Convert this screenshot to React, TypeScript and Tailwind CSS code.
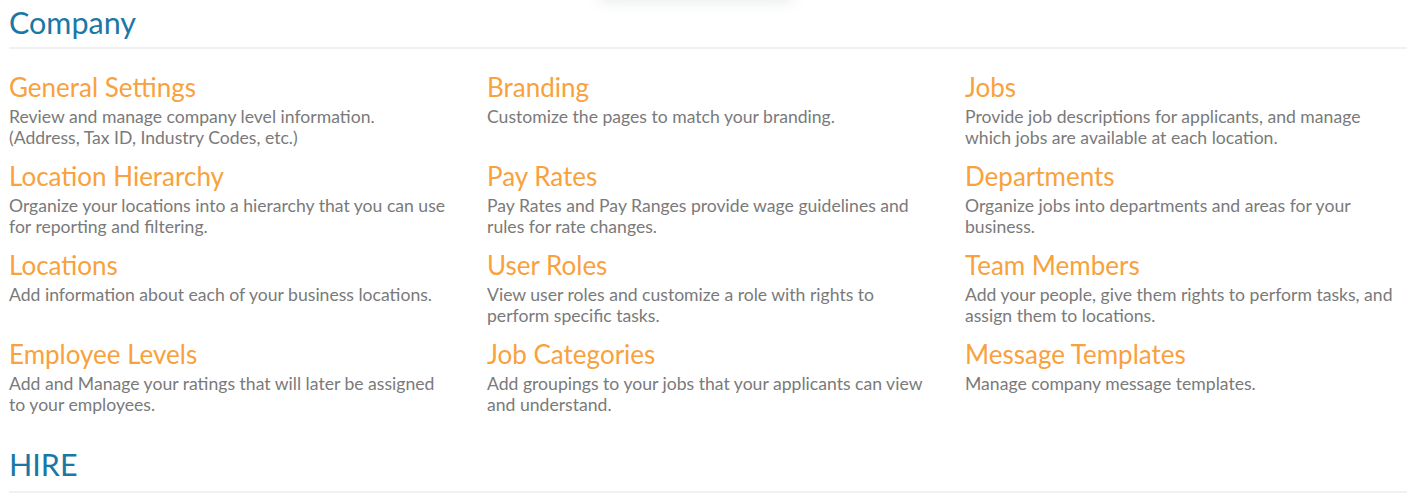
import React from "react";

const items: { title: string; desc: string }[][] = [
  [
    { title: "General Settings", desc: "Review and manage company level information.\n(Address, Tax ID, Industry Codes, etc.)" },
    { title: "Branding", desc: "Customize the pages to match your branding." },
    { title: "Jobs", desc: "Provide job descriptions for applicants, and manage\nwhich jobs are available at each location." },
  ],
  [
    { title: "Location Hierarchy", desc: "Organize your locations into a hierarchy that you can use\nfor reporting and filtering." },
    { title: "Pay Rates", desc: "Pay Rates and Pay Ranges provide wage guidelines and\nrules for rate changes." },
    { title: "Departments", desc: "Organize jobs into departments and areas for your\nbusiness." },
  ],
  [
    { title: "Locations", desc: "Add information about each of your business locations." },
    { title: "User Roles", desc: "View user roles and customize a role with rights to\nperform specific tasks." },
    { title: "Team Members", desc: "Add your people, give them rights to perform tasks, and\nassign them to locations." },
  ],
  [
    { title: "Employee Levels", desc: "Add and Manage your ratings that will later be assigned\nto your employees." },
    { title: "Job Categories", desc: "Add groupings to your jobs that your applicants can view\nand understand." },
    { title: "Message Templates", desc: "Manage company message templates." },
  ],
];

export default function App() {
  return (
    <div
      className="relative w-[1410px] h-[498px] overflow-hidden bg-white"
      style={{ fontFamily: "Lato, 'Open Sans', sans-serif" }}
    >
      <div className="absolute left-[598px] top-[-40px] w-[196px] h-[40px] rounded-md bg-white shadow-[0_2px_14px_rgba(40,60,90,0.10)]" />
      <div className="pl-[9px] pr-[3px]">
        <h1 className="text-[30.5px] leading-[36px] pt-[4px] text-[#1b78a6]">Company</h1>
        <div className="mt-[7px] h-[2px] bg-[#f1f1f1]" />
        <div className="grid grid-cols-[478px_478px_1fr] gap-y-[14px] mt-[24px]">
          {items.flat().map((it) => (
            <div key={it.title}>
              <div className="text-[26px] leading-[28px] text-[#f9a13c]">{it.title}</div>
              <div className="mt-[5px] text-[17.6px] leading-[21px] text-[#7a7a7a] whitespace-pre">{it.desc}</div>
            </div>
          ))}
        </div>
        <h2 className="mt-[31px] text-[30.5px] leading-[36px] text-[#1b78a6]">HIRE</h2>
        <div className="mt-[9px] h-[2px] bg-[#f1f1f1]" />
      </div>
    </div>
  );
}
